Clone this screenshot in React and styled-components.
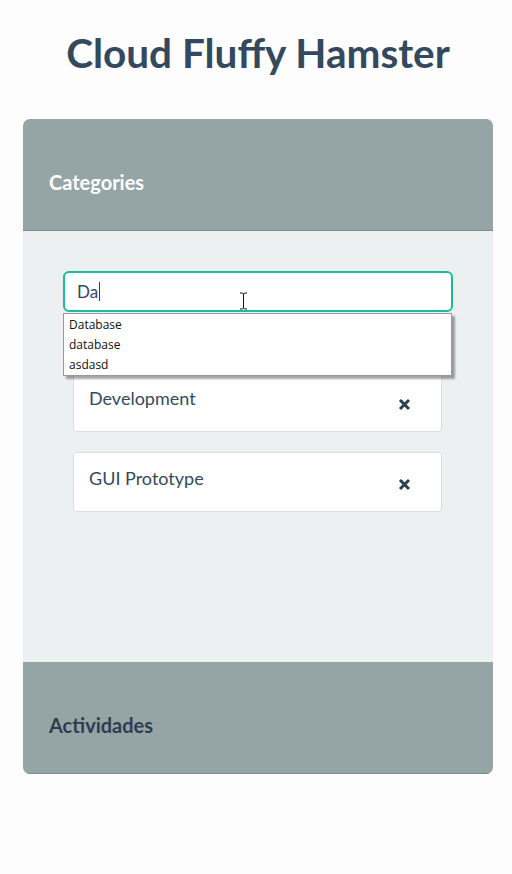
import React from 'react';
import styled, { createGlobalStyle } from 'styled-components';

const GlobalStyle = createGlobalStyle`
  html, body {
    margin: 0;
    padding: 0;
    background: #fdfdfd;
    font-family: Lato, "Open Sans", sans-serif;
  }
`;

const Page = styled.div`
  width: 512px;
  min-height: 874px;
  padding: 0 19px 0 23px;
  box-sizing: border-box;
`;

const Title = styled.h1`
  margin: 0;
  padding: 28px 0 0;
  height: 119px;
  box-sizing: border-box;
  text-align: center;
  font-size: 40.5px;
  font-weight: 700;
  color: #34495e;
  line-height: 50px;
`;

const Panel = styled.section`
  width: 470px;
  border-radius: 7px;
  overflow: hidden;
  background: #ecf0f1;
`;

const PanelHeader = styled.div`
  height: 112px;
  box-sizing: border-box;
  padding: 50px 26px 0;
  background: #95a5a6;
  border-bottom: 1px solid #7f8c8d;
  font-size: 20px;
  font-weight: 700;
  line-height: 26px;
  color: ${p => (p.$dark ? '#2c3e50' : '#ffffff')};
`;

const PanelBody = styled.div`
  height: 431px;
  box-sizing: border-box;
  padding: 40px 40px 0;
`;

const SearchWrap = styled.div`
  position: relative;
  margin-bottom: 60px;
`;

const SearchBox = styled.div`
  height: 41px;
  box-sizing: border-box;
  border: 2px solid #1abc9c;
  border-radius: 6px;
  background: #fff;
  display: flex;
  align-items: center;
  padding: 0 12px;
  font-size: 17px;
  color: #34495e;
`;

const Caret = styled.span`
  display: inline-block;
  width: 1px;
  height: 19px;
  background: #2c3e50;
  margin-left: 1px;
`;

const Pointer = styled.svg`
  position: absolute;
  left: 176px;
  top: 21px;
`;

const Suggestions = styled.ul`
  position: absolute;
  left: 0;
  top: 42px;
  width: 389px;
  margin: 0;
  padding: 1px 0 0;
  list-style: none;
  background: #fff;
  border: 1px solid #999;
  box-shadow: 3px 3px 2px rgba(0, 0, 0, 0.35);
  box-sizing: border-box;
  z-index: 2;
`;

const Suggestion = styled.li`
  padding: 0 5px;
  height: 20px;
  line-height: 20px;
  font-family: "Open Sans", "DejaVu Sans", sans-serif;
  font-size: 12px;
  color: #111;
`;

const ItemList = styled.div`
  display: flex;
  flex-direction: column;
  gap: 20px;
  padding: 0 11px 0 10px;
`;

const Item = styled.div`
  height: 60px;
  box-sizing: border-box;
  background: #fff;
  border: 1px solid #dcdfe0;
  border-radius: 3px;
  padding: 13px 30px 0 15px;
  display: flex;
  justify-content: space-between;
  align-items: flex-start;
  font-size: 18px;
  line-height: 24px;
  color: #34495e;
`;

const Remove = styled.span`
  margin-top: 12px;
  display: flex;
`;

const Close = () => (
  <svg width="13" height="13" viewBox="0 0 13 13">
    <path d="M2 2 L11 11 M11 2 L2 11" stroke="#2c3e50" strokeWidth="3" strokeLinecap="butt" />
  </svg>
);

const categories = ['Development', 'GUI Prototype'];
const matches = ['Database', 'database', 'asdasd'];

export default function App() {
  return (
    <>
      <GlobalStyle />
      <Page>
        <Title>Cloud Fluffy Hamster</Title>
        <Panel>
          <PanelHeader>Categories</PanelHeader>
          <PanelBody>
            <SearchWrap>
              <SearchBox>
                Da<Caret />
              </SearchBox>
              <Pointer width="9" height="18" viewBox="0 0 9 18">
                <path d="M1 1 H3.5 L4.5 2 L5.5 1 H8 M4.5 2 V16 M1 17 H3.5 L4.5 16 L5.5 17 H8" stroke="#111" strokeWidth="1" fill="none" />
              </Pointer>
              <Suggestions>
                {matches.map(m => (
                  <Suggestion key={m}>{m}</Suggestion>
                ))}
              </Suggestions>
            </SearchWrap>
            <ItemList>
              {categories.map(c => (
                <Item key={c}>
                  {c}
                  <Remove><Close /></Remove>
                </Item>
              ))}
            </ItemList>
          </PanelBody>
          <PanelHeader $dark>Actividades</PanelHeader>
        </Panel>
      </Page>
    </>
  );
}
